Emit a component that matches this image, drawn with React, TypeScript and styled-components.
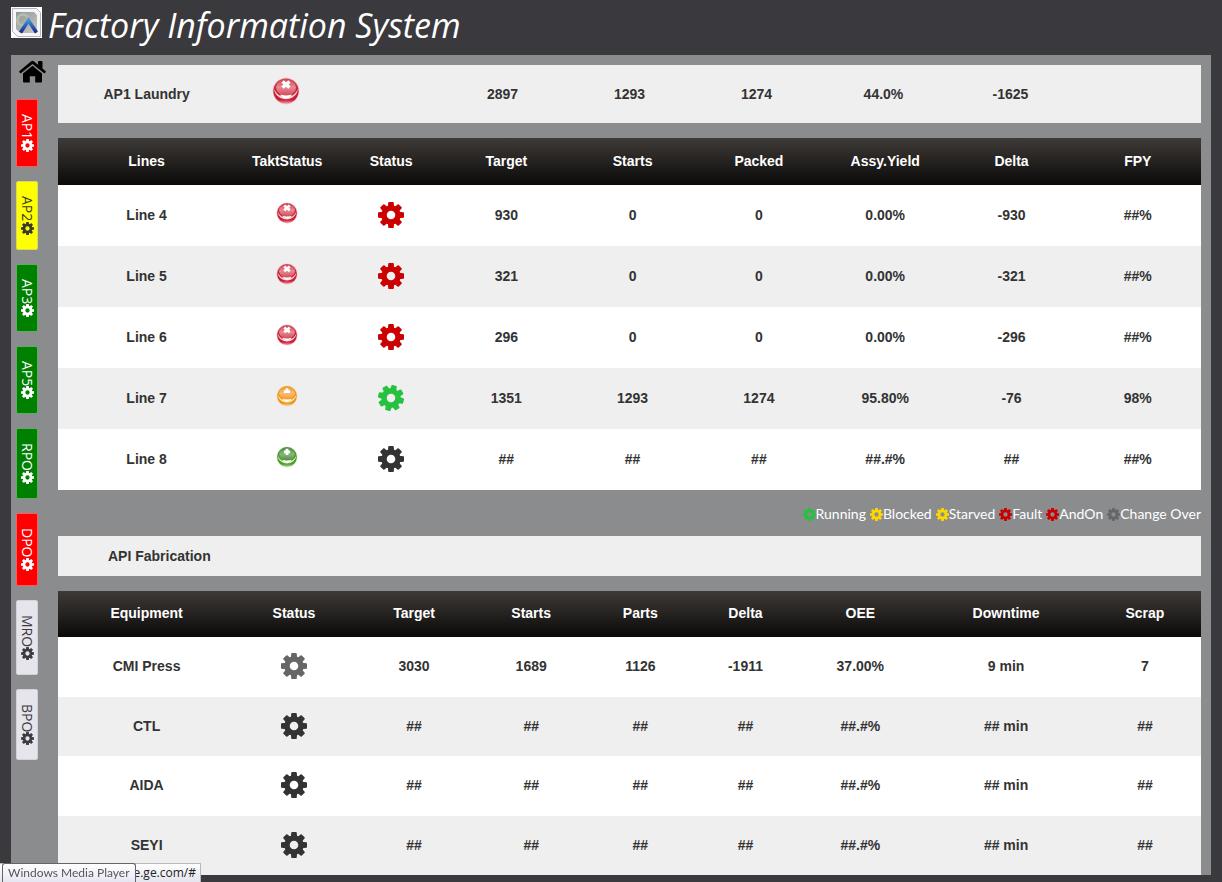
import React from 'react';
import styled, { createGlobalStyle } from 'styled-components';

const GlobalStyle = createGlobalStyle`
  *, *::before, *::after { box-sizing: border-box; }
  body {
    margin: 0;
    background: #3a393e;
    color: #333;
    font-family: 'Liberation Sans', Arial, sans-serif;
    font-size: 14px;
  }
`;

const uiFont = `'Open Sans', 'Noto Sans', sans-serif`;
const narrowFont = `Lato, 'Open Sans', sans-serif`;

const Page = styled.div`
  padding: 0 11px 7px;
`;

const Header = styled.header`
  display: flex;
  align-items: center;
  gap: 6px;
  height: 55px;
  padding-bottom: 5px;
`;

const Logo = styled.svg`
  flex: none;
  width: 31px;
  height: 31px;
  margin-bottom: 6px;
`;

const Title = styled.h1`
  margin: 0;
  color: #fff;
  font: italic 400 34px/50px ${uiFont};
  white-space: nowrap;
`;

const Panel = styled.div`
  display: flex;
  background: #8b8c8e;
`;

const Sidebar = styled.nav`
  display: flex;
  flex: none;
  flex-direction: column;
  align-items: flex-start;
  gap: 14px;
  width: 47px;
  padding: 5px 0 0 5px;
`;

const HomeLink = styled.a`
  margin-left: 3px;
  height: 25px;
  color: #000;
`;

const HomeIcon = styled.svg`
  display: block;
  width: 27px;
  height: 23px;
`;

const tones = {
  red: { background: '#fe0000', color: '#fff', border: '#ff5a5a' },
  yellow: { background: '#ffff00', color: '#3a3a30', border: '#d8d860' },
  green: { background: '#008001', color: '#fff', border: '#5fae60' },
  plain: { background: '#e6e5ec', color: '#3c3b42', border: '#d2d2d8' },
};
type Tone = keyof typeof tones;

const PlantButton = styled.button<{ $tone: Tone }>`
  display: flex;
  align-items: center;
  width: 22px;
  padding: 14px 0;
  border: 1px solid ${(p) => tones[p.$tone].border};
  border-radius: 2px;
  background: ${(p) => tones[p.$tone].background};
  color: ${(p) => tones[p.$tone].color};
  font: 400 14px/20px ${uiFont};
  writing-mode: vertical-rl;
  cursor: pointer;
`;

const Content = styled.main`
  flex: 1;
  min-width: 0;
  padding: 10px 10px 0 0;
`;

const Table = styled.table`
  width: 100%;
  border-collapse: collapse;
  table-layout: fixed;
  font-weight: bold;
  text-align: center;
`;

const SummaryTable = styled(Table)`
  margin-bottom: 15px;
  background: #efefef;

  th, td { height: 58px; padding: 0; }
`;

const HeadCell = styled.th<{ $width: string }>`
  width: ${(p) => p.$width};
  padding: 0;
`;

const DataTable = styled(Table)<{ $head: number; $odd: number; $even: number }>`
  thead tr {
    height: ${(p) => p.$head}px;
    background: linear-gradient(#3e3a37, #0b0a09);
    color: #fff;
  }
  tbody tr { height: ${(p) => p.$odd}px; background: #fff; }
  tbody tr:nth-child(even) { height: ${(p) => p.$even}px; background: #efefef; }
  th, td { padding: 0 0 2px; }
`;

const Icon = styled.svg<{ $size: number }>`
  display: block;
  flex: none;
  width: ${(p) => p.$size}px;
  height: ${(p) => p.$size}px;
  margin: 0 auto;
`;

const BallCell = styled.td`
  && { padding-bottom: 6px; }
`;

const Legend = styled.ul`
  display: flex;
  justify-content: flex-end;
  align-items: center;
  gap: 4px;
  height: 46px;
  margin: 0;
  padding: 2px 0 0;
  list-style: none;
  color: #fff;
  font: 400 14px/20px ${narrowFont};
`;

const LegendItem = styled.li`
  display: flex;
  align-items: center;
`;

const SectionTitle = styled.h2`
  margin: 0 0 15px;
  padding: 0 50px;
  background: #efefef;
  font-size: 14px;
  line-height: 40px;
`;

const StatusBar = styled.div`
  position: fixed;
  bottom: 0;
  left: 0;
  width: 201px;
  padding-right: 4px;
  border: 1px solid #b9b9b9;
  border-width: 1px 1px 0 0;
  background: linear-gradient(#fff, #e4e5ee);
  color: #222;
  font: 400 12px/18px ${uiFont};
  text-align: right;
`;

const Tooltip = styled.div`
  position: fixed;
  bottom: 0;
  left: 2px;
  padding: 0 5px;
  border: 1px solid #646464;
  border-bottom: 0;
  border-radius: 3px 3px 0 0;
  background: linear-gradient(#fff, #e6e6f2);
  color: #575757;
  font: 400 12px/18px ${narrowFont};
  white-space: nowrap;
`;

const colors = {
  red: '#cc0000',
  green: '#26c13f',
  dark: '#333333',
  grey: '#666666',
  yellow: '#fcd700',
};

function Gear({ color, size = 26, turned }: { color: string; size?: number; turned?: boolean }) {
  return (
    <Icon $size={size} viewBox="-13 -13 26 26" aria-hidden="true">
      <g transform={turned ? 'rotate(15)' : undefined}>
        <circle r="7" fill="none" stroke={color} strokeWidth="5.400" />
        {[0, 45, 90, 135].map((a) => (
          <path
            key={a}
            transform={`rotate(${a})`}
            fill={color}
            d="M-2-13h4q.6 0 .7.6l.5 4.400h-6.400l.5-4.400q.1-.6.7-.6zM-2 13h4q.6 0 .7-.6l.5-4.400h-6.400l.5 4.400q.1.6.7.6z"
          />
        ))}
      </g>
    </Icon>
  );
}

const balls = {
  red: { edge: '#c81f38', mid: '#d34a5a', soft: '#e58a92', pale: '#fbdcda', glow: '#f49aa2' },
  orange: { edge: '#ee9420', mid: '#f09a34', soft: '#f8bd72', pale: '#fff3a0', glow: '#f8cf98' },
  green: { edge: '#4c9a30', mid: '#4f8f40', soft: '#86b878', pale: '#e2f8bd', glow: '#b9dfa8' },
};
type BallTone = keyof typeof balls;

const marks: Record<BallTone, string> = {
  red: 'M-3.500-9.500l7 6M3.500-9.500l-7 6',
  orange: 'M-4-5.500h8M0-10v5',
  green: 'M-4-6.500h8M0-10.500v8',
};

function Ball({ tone, size = 22 }: { tone: BallTone; size?: number }) {
  const c = balls[tone];
  const id = `ball-${tone}-${size}`;
  return (
    <Icon $size={size} viewBox="-14 -14 28 28" role="img" aria-label={tone}>
      <defs>
        <radialGradient id={`${id}-glow`}>
          <stop offset="0.800" stopColor={c.glow} />
          <stop offset="1" stopColor={c.glow} stopOpacity="0" />
        </radialGradient>
        <linearGradient id={`${id}-body`} x2="0" y2="1">
          <stop offset="0" stopColor={c.mid} />
          <stop offset="0.500" stopColor={c.edge} />
          <stop offset="0.850" stopColor={c.edge} />
          <stop offset="1" stopColor={c.glow} />
        </linearGradient>
        <linearGradient id={`${id}-cap`} x2="0" y2="1">
          <stop offset="0" stopColor={c.mid} />
          <stop offset="0.500" stopColor={c.soft} />
          <stop offset="1" stopColor={c.mid} />
        </linearGradient>
      </defs>
      <circle r="14" fill={`url(#${id}-glow)`} />
      <circle r="12.600" fill={`url(#${id}-body)`} />
      <path d="M-12-2C-10 11.500 10 11.500 12-2C9 4 5 6 0 6S-9 4-12-2z" fill={c.pale} />
      <path d="M-6 3.500C-4 8 4 8 6 3.500z" fill="#fff" />
      <ellipse cy="-3.500" rx="10" ry="8" fill={`url(#${id}-cap)`} />
      <path d={marks[tone]} stroke="#fff" strokeWidth="3.600" fill="none" />
    </Icon>
  );
}

const plants: { name: string; tone: Tone }[] = [
  { name: 'AP1', tone: 'red' },
  { name: 'AP2', tone: 'yellow' },
  { name: 'AP3', tone: 'green' },
  { name: 'AP5', tone: 'green' },
  { name: 'RPO', tone: 'green' },
  { name: 'DPO', tone: 'red' },
  { name: 'MRO', tone: 'plain' },
  { name: 'BPO', tone: 'plain' },
];

const lineColumns: [string, string][] = [
  ['Lines', '15.5%'],
  ['TaktStatus', '9.1%'],
  ['Status', '9.1%'],
  ['Target', '11.05%'],
  ['Starts', '11.05%'],
  ['Packed', '11.05%'],
  ['Assy.Yield', '11.05%'],
  ['Delta', '11.05%'],
  ['FPY', '11.05%'],
];

const lines: { name: string; takt: BallTone; status: keyof typeof colors; values: string[] }[] = [
  { name: 'Line 4', takt: 'red', status: 'red', values: ['930', '0', '0', '0.00%', '-930', '##%'] },
  { name: 'Line 5', takt: 'red', status: 'red', values: ['321', '0', '0', '0.00%', '-321', '##%'] },
  { name: 'Line 6', takt: 'red', status: 'red', values: ['296', '0', '0', '0.00%', '-296', '##%'] },
  { name: 'Line 7', takt: 'orange', status: 'green', values: ['1351', '1293', '1274', '95.80%', '-76', '98%'] },
  { name: 'Line 8', takt: 'green', status: 'dark', values: ['##', '##', '##', '##.#%', '##', '##%'] },
];

const equipmentColumns: [string, string][] = [
  ['Equipment', '15.5%'],
  ['Status', '10.3%'],
  ['Target', '10.7%'],
  ['Starts', '9.8%'],
  ['Parts', '9.3%'],
  ['Delta', '9.1%'],
  ['OEE', '11%'],
  ['Downtime', '14.5%'],
  ['Scrap', '9.8%'],
];

const blank = ['##', '##', '##', '##', '##.#%', '## min', '##'];
const equipment: { name: string; status: keyof typeof colors; values: string[] }[] = [
  { name: 'CMI Press', status: 'grey', values: ['3030', '1689', '1126', '-1911', '37.00%', '9 min', '7'] },
  { name: 'CTL', status: 'dark', values: blank },
  { name: 'AIDA', status: 'dark', values: blank },
  { name: 'SEYI', status: 'dark', values: blank },
];

const legend: [string, keyof typeof colors][] = [
  ['Running', 'green'],
  ['Blocked', 'yellow'],
  ['Starved', 'yellow'],
  ['Fault', 'red'],
  ['AndOn', 'red'],
  ['Change Over', 'grey'],
];

function AppLogo() {
  return (
    <Logo viewBox="0 0 31 31" aria-hidden="true">
      <defs>
        <linearGradient id="logo-plate" x2="1" y2="1">
          <stop offset="0" stopColor="#8f9690" />
          <stop offset="1" stopColor="#c9c9c4" />
        </linearGradient>
        <linearGradient id="logo-mark" x2="0" y2="1">
          <stop offset="0" stopColor="#3f93d8" />
          <stop offset="1" stopColor="#1a2690" />
        </linearGradient>
      </defs>
      <path d="M0 0h31v31H0z" fill="#fff" />
      <path d="M1.500 1.500h24l4 4v24h-23l-5-5z" fill="#f6f6f8" stroke="#b4b5bb" />
      <path d="M5 5h18l3 3v18H9l-4-4z" fill="url(#logo-plate)" />
      <circle cx="12" cy="13" r="5.500" fill="none" stroke="#b4bab0" strokeWidth="3" />
      <path d="M9.500 25.500l8-12 8 12" fill="none" stroke="url(#logo-mark)" strokeWidth="3.600" />
    </Logo>
  );
}

function HeadRow({ columns }: { columns: [string, string][] }) {
  return (
    <thead>
      <tr>
        {columns.map(([label, width]) => (
          <HeadCell key={label} $width={width} scope="col">{label}</HeadCell>
        ))}
      </tr>
    </thead>
  );
}

export default function App() {
  return (
    <>
      <GlobalStyle />
      <Page>
        <Header>
          <AppLogo />
          <Title>Factory Information System</Title>
        </Header>
        <Panel>
          <Sidebar>
            <HomeLink href="#" aria-label="Home">
              <HomeIcon viewBox="0 0 27 23" fill="currentColor" aria-hidden="true">
                <path d="M12.200 1.300q1.300-1 2.600 0L19 4.800V2q0-1 1-1h2.500q1 0 1 1v6.600l3 2.500q.6.600.1 1.200l-.7.8q-.5.500-1.100 0L13.500 4 2.200 13.100q-.6.500-1.100 0l-.7-.8q-.5-.6.1-1.200z" />
                <path d="M13.500 5.800l9.500 7.700v8q0 1-1 1h-5.800v-6.200h-5.400v6.200H5q-1 0-1-1v-8z" />
              </HomeIcon>
            </HomeLink>
            {plants.map((p) => (
              <PlantButton key={p.name} type="button" $tone={p.tone}>
                {p.name}
                <Gear size={13} color={tones[p.tone].color} />
              </PlantButton>
            ))}
          </Sidebar>
          <Content>
            <SummaryTable>
              <tbody>
                <tr>
                  <HeadCell as="th" scope="row" $width="15.5%">AP1 Laundry</HeadCell>
                  <HeadCell as={BallCell} $width="8.9%"><Ball tone="red" size={28} /></HeadCell>
                  <HeadCell as="td" $width="8.9%" />
                  {['2897', '1293', '1274', '44.0%', '-1625', ''].map((v, i) => (
                    <HeadCell as="td" key={i} $width="11.1%">{v}</HeadCell>
                  ))}
                </tr>
              </tbody>
            </SummaryTable>
            <DataTable $head={47} $odd={61} $even={61}>
              <HeadRow columns={lineColumns} />
              <tbody>
                {lines.map((l) => (
                  <tr key={l.name}>
                    <th scope="row">{l.name}</th>
                    <BallCell><Ball tone={l.takt} /></BallCell>
                    <td><Gear color={colors[l.status]} turned={l.status === 'green'} /></td>
                    {l.values.map((v, i) => <td key={i}>{v}</td>)}
                  </tr>
                ))}
              </tbody>
            </DataTable>
            <Legend>
              {legend.map(([label, color]) => (
                <LegendItem key={label}><Gear size={13} color={colors[color]} />{label}</LegendItem>
              ))}
            </Legend>
            <SectionTitle>API Fabrication</SectionTitle>
            <DataTable $head={46} $odd={60} $even={59}>
              <HeadRow columns={equipmentColumns} />
              <tbody>
                {equipment.map((e) => (
                  <tr key={e.name}>
                    <th scope="row">{e.name}</th>
                    <td><Gear color={colors[e.status]} /></td>
                    {e.values.map((v, i) => <td key={i}>{v}</td>)}
                  </tr>
                ))}
              </tbody>
            </DataTable>
          </Content>
        </Panel>
      </Page>
      <StatusBar>e.ge.com/#</StatusBar>
      <Tooltip role="tooltip">Windows Media Player</Tooltip>
    </>
  );
}
